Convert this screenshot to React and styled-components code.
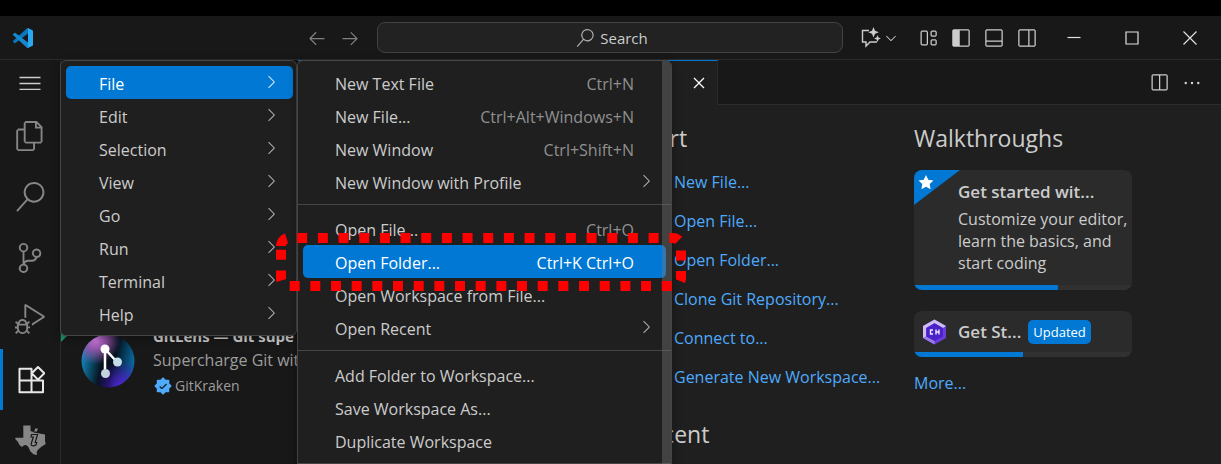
import React from "react";
import styled, { createGlobalStyle } from "styled-components";
import {
  VscArrowLeft, VscArrowRight, VscSearch, VscChevronDown, VscChevronRight,
  VscLayout, VscLayoutSidebarLeft, VscLayoutPanelOff, VscLayoutSidebarRightOff,
  VscSplitHorizontal, VscEllipsis, VscClose, VscFiles, VscSourceControl,
  VscDebugAlt, VscVerifiedFilled,
} from "react-icons/vsc";

const GlobalStyle = createGlobalStyle`
  *, *::before, *::after { box-sizing: border-box; }
  body {
    margin: 0;
    background: #000;
    color: #cccccc;
    font: 16px/22px "Open Sans", "Noto Sans", sans-serif;
  }
  button { font: inherit; color: inherit; background: none; border: 0; padding: 0; }
  a { color: #4daafc; text-decoration: none; }
  h2, h3, p, ul { margin: 0; padding: 0; }
`;

const Screen = styled.div`
  display: flex;
  flex-direction: column;
  height: 100vh;
  padding-top: 16px;
  overflow: hidden;
`;

const Window = styled.div`
  position: relative;
  flex: 1;
  min-height: 0;
  display: flex;
  flex-direction: column;
  background: #181818;
`;

const TitleBar = styled.header`
  flex: none;
  height: 44px;
  display: grid;
  grid-template-columns: 1fr minmax(120px, 466px) 1fr;
  align-items: center;
  padding-right: 1px;
  border-bottom: 1px solid #2b2b2b;
`;

const TitleSide = styled.div`
  display: flex;
  align-items: center;
  justify-content: ${(p) => (p.$end ? "flex-end" : "space-between")};
  padding: ${(p) => (p.$end ? "0 1px 0 0" : "0 11px 0 13px")};
`;

const Group = styled.div`
  display: flex;
  align-items: center;
  margin-right: ${(p) => p.$after || 0}px;
`;

const IconButton = styled.button`
  width: ${(p) => p.$w || 33}px;
  height: 33px;
  display: flex;
  align-items: center;
  justify-content: center;
  color: ${(p) => (p.$dim ? "#7f7f7f" : "#cccccc")};
  font-size: 20px;
`;

const SearchBox = styled.button`
  height: 31px;
  display: flex;
  align-items: center;
  justify-content: center;
  gap: 6px;
  padding-left: 4px;
  font-size: 15px;
  background: #222222;
  border: 1px solid #424242;
  border-radius: 8px;
  svg { font-size: 18px; color: #b0b0b0; }
`;

const Body = styled.div`
  flex: 1;
  min-height: 0;
  display: flex;
`;

const ActivityBar = styled.nav`
  flex: none;
  width: 61px;
  display: flex;
  flex-direction: column;
  border-right: 1px solid #2b2b2b;
  overflow: hidden;
`;

const Activity = styled.button`
  flex: none;
  height: ${(p) => (p.$short ? 45 : 61)}px;
  display: flex;
  align-items: center;
  justify-content: center;
  color: ${(p) => (p.$active ? "#e8e8e8" : "#868686")};
  border-left: 3px solid ${(p) => (p.$active ? "#0078d4" : "transparent")};
  border-right: 3px solid transparent;
  font-size: 30px;
`;

const SideBar = styled.aside`
  flex: none;
  width: 237px;
  padding-top: 250px;
  overflow: hidden;
`;

const Extension = styled.article`
  position: relative;
  display: flex;
  gap: 18px;
  padding: 14px 0 14px 20px;
`;

const Ribbon = styled.span`
  position: absolute;
  top: 0;
  left: 0;
  width: 32px;
  height: 32px;
  background: #1f9070;
  clip-path: polygon(0 0, 100% 0, 0 100%);
`;

const ExtensionIcon = styled.svg`
  flex: none;
  width: 54px;
  height: 54px;
  margin-top: 10px;
`;

const ExtensionText = styled.div`
  white-space: nowrap;
  line-height: 24px;
  h3 { font-size: 15px; line-height: 24px; font-weight: 700; }
  p { color: #9d9d9d; font-size: 16px; }
`;

const Publisher = styled.div`
  display: flex;
  align-items: center;
  gap: 2px;
  line-height: 27px;
  font-size: 14px;
  color: #9d9d9d;
  svg { font-size: 20px; color: #4daafc; }
`;

const Editor = styled.main`
  flex: 1;
  min-width: 0;
  display: flex;
  flex-direction: column;
  background: #1f1f1f;
`;

const TabBar = styled.div`
  flex: none;
  height: 45px;
  display: flex;
  justify-content: space-between;
  background: #181818;
  box-shadow: inset 0 -1px #2b2b2b;
  padding-right: 13px;
`;

const Tab = styled.div`
  width: 420px;
  display: flex;
  align-items: center;
  justify-content: flex-end;
  padding-right: 2px;
  background: #1f1f1f;
  border-top: 1px solid #0078d4;
  border-right: 1px solid #2b2b2b;
  color: #fff;
`;

const Welcome = styled.div`
  display: grid;
  grid-template-columns: 278px minmax(0, 218px);
  padding: 17px 0 0 338px;
`;

const Heading = styled.h2`
  font-size: 23px;
  line-height: 32px;
  font-weight: 400;
  margin-bottom: ${(p) => p.$after || 0}px;
`;

const LinkList = styled.ul`
  list-style: none;
  display: flex;
  flex-direction: column;
  gap: 17px;
  padding-left: 38px;
  margin-bottom: 30px;
  white-space: nowrap;
`;

const Card = styled.button`
  position: relative;
  width: 100%;
  display: block;
  text-align: left;
  background: #2b2b2b;
  border-radius: 8px;
  margin-bottom: ${(p) => p.$after}px;
  overflow: hidden;
`;

const CardBody = styled.div`
  display: flex;
  align-items: center;
  gap: 7px;
  padding: ${(p) => (p.$tall ? "10px 4px 11px 44px" : "8px 8px 7px")};
`;

const CardTitle = styled.h3`
  font-size: 17px;
  line-height: 24px;
  font-weight: 600;
`;

const CardText = styled.p`
  margin-top: 4px;
`;

const Corner = styled.svg`
  position: absolute;
  top: 0;
  left: 0;
  width: 46px;
  height: 35px;
`;

const Badge = styled.span`
  background: #0078d4;
  color: #fff;
  border-radius: 5px;
  padding: 0 5px;
  font-size: 13px;
  line-height: 24px;
`;

const Progress = styled.div`
  height: 5px;
  background: linear-gradient(#0078d4, #0078d4) 0 0 / ${(p) => p.$value}% 100% no-repeat #313131;
`;

const Menu = styled.div`
  position: absolute;
  top: 44px;
  left: ${(p) => p.$left}px;
  width: ${(p) => p.$width}px;
  padding: 5px 0;
  background: #1f1f1f;
  border: 1px solid #454545;
  border-radius: 6px;
  box-shadow: 0 2px 8px rgba(0, 0, 0, 0.36);
  overflow: hidden;
`;

const MenuItem = styled.button`
  width: calc(100% - ${(p) => (p.$sub ? 10 : 8)}px);
  margin-left: 5px;
  height: 33px;
  display: flex;
  align-items: center;
  justify-content: space-between;
  padding: 2px ${(p) => (p.$chevron ? (p.$sub ? 10 : 12) : 32)}px 0 ${(p) => (p.$sub ? 32 : 33)}px;
  border-radius: 5px;
  background: ${(p) => (p.$active ? "#0078d4" : "none")};
  color: ${(p) => (p.$active ? "#fff" : "#cccccc")};
  svg { font-size: 20px; margin-bottom: 4px; color: ${(p) => (p.$active ? "#d0e4f5" : "#a8a8a8")}; }
`;

const Shortcut = styled.span`
  color: ${(p) => (p.$active ? "#fff" : "#909090")};
`;

const Separator = styled.hr`
  height: 1px;
  margin: 6px 0 7px;
  border: 0;
  background: #454545;
`;

const ScrollBar = styled.div`
  position: absolute;
  top: 0;
  right: 0;
  bottom: 0;
  width: 9px;
  background: rgba(121, 121, 121, 0.4);
`;

const Highlight = styled.svg`
  position: absolute;
  top: 216px;
  left: 276px;
  width: 410px;
  height: 60px;
  pointer-events: none;
`;

const VSCodeLogo = () => (
  <svg width="20" height="20" viewBox="0 0 100 100" aria-hidden="true">
    <path fill="#0b76bd" d="M96.46 10.8L75.86.88A6.25 6.25 0 0 0 68.75 2.08L1.3 63.58a4.17 4.17 0 0 0 0 6.16l5.51 5.01a4.17 4.17 0 0 0 5.32.24L93.36 13.37C96.09 11.3 100 13.25 100 16.67v-.24a6.25 6.25 0 0 0-3.54-5.63Z" />
    <path fill="#1688d0" d="M96.46 89.2l-20.6 9.92a6.25 6.25 0 0 1-7.11-1.2L1.3 36.42a4.17 4.17 0 0 1 0-6.17l5.51-5a4.17 4.17 0 0 1 5.32-.24l81.23 61.62C96.09 88.7 100 86.75 100 83.33v.24a6.25 6.25 0 0 1-3.54 5.63Z" />
    <path fill="#29a9f2" d="M75.86 99.13a6.25 6.25 0 0 1-7.11-1.21C71.06 100.22 75 98.59 75 95.33V4.67c0-3.26-3.94-4.9-6.25-2.59A6.25 6.25 0 0 1 75.86.87l20.6 9.91A6.25 6.25 0 0 1 100 16.41v67.18a6.25 6.25 0 0 1-3.54 5.63L75.86 99.13Z" />
  </svg>
);

const ChatSparkle = () => (
  <svg width="21" height="21" viewBox="0 0 21 21" aria-hidden="true">
    <path d="M9 3.500H2.500V15H6v4l4-4h7" fill="none" stroke="#cccccc" strokeWidth="1.400" />
    <path d="M13.500 0l1.500 3.800L18.800 5.300 15 6.800l-1.500 3.800L12 6.800 8.200 5.300 12 3.800z" fill="#cccccc" />
    <path d="M17.500 8.200l1 2.300 2.400 1-2.400 1-1 2.400-1-2.400-2.400-1 2.400-1z" fill="#cccccc" />
  </svg>
);

const WindowGlyph = ({ d }) => (
  <svg width="14" height="14" viewBox="0 0 14 14" aria-hidden="true">
    <path d={d} fill="none" stroke="#e0e0e0" strokeWidth="1.200" />
  </svg>
);

const Burger = () => (
  <svg width="22" height="14" viewBox="0 0 22 14" aria-hidden="true">
    <path d="M0.500 1.500h21M0.500 7.500h21M0.500 13.500h21" stroke="#cccccc" strokeWidth="1.300" />
  </svg>
);

const ExtensionsIcon = () => (
  <svg width="30" height="30" viewBox="0 0 30 30" aria-hidden="true">
    <path
      d="M4.500 3.800h12v23.400h-12zM4.500 15.500H28v11.700H16.500V15.500M23 2l6.300 6.300L23 14.600l-6.300-6.300z"
      fill="none" stroke="currentColor" strokeWidth="2" strokeLinejoin="round"
    />
  </svg>
);

const StateIcon = () => (
  <svg width="31" height="31" viewBox="0 0 31 31" aria-hidden="true">
    <path
      fill="#868686"
      d="M8.300 0.500H15.500V6l5 1.800 4 .7L30 9.500v6.500l.7 3-4 2.500-4 3.500-1 2 .3 3-3.500-.8-3-2.700-2.400-5-2.300-1.500-1.800.2L7 22l-2.500-2L3 17 .3 14v-1.200h8z"
    />
    <path d="M16.500 9.500h6l-2.300 8h1.500l-.7 2.500c-2 1-5.500 1.500-4.700-1.500l2-6.500h-2.300z" fill="#868686" stroke="#181818" strokeWidth="1.200" />
    <path d="M19.800 3h3.700l-1.200 4h-3.700z" fill="#868686" stroke="#181818" strokeWidth="1" />
  </svg>
);

const GitLensLogo = () => (
  <ExtensionIcon viewBox="0 0 54 54" aria-hidden="true">
    <defs>
      <linearGradient id="lens" x1="0" y1="0.400" x2="1" y2="0.600">
        <stop offset="0" stopColor="#1289c0" />
        <stop offset="0.400" stopColor="#06121c" />
        <stop offset="0.600" stopColor="#04101c" />
        <stop offset="1" stopColor="#0a70a8" />
      </linearGradient>
      <radialGradient id="pink" cx="0.260" cy="0.080" r="0.480">
        <stop offset="0" stopColor="#d77ce6" />
        <stop offset="0.450" stopColor="#9c55ae" stopOpacity="0.850" />
        <stop offset="1" stopColor="#9c55ae" stopOpacity="0" />
      </radialGradient>
      <radialGradient id="violet" cx="0.760" cy="0.980" r="0.500">
        <stop offset="0" stopColor="#5a22e0" />
        <stop offset="1" stopColor="#4010b0" stopOpacity="0" />
      </radialGradient>
    </defs>
    <circle cx="27" cy="27" r="26.500" fill="url(#lens)" />
    <circle cx="27" cy="27" r="26.500" fill="url(#pink)" />
    <circle cx="27" cy="27" r="26.500" fill="url(#violet)" />
    <path d="M24 15v24M24 15l12 13" stroke="#fff" strokeWidth="2.500" />
    <circle cx="24" cy="15" r="4.500" fill="#fff" />
    <circle cx="36.500" cy="28" r="4.500" fill="#c4dbe8" />
    <circle cx="24.500" cy="39.500" r="4.500" fill="#c4d3de" />
  </ExtensionIcon>
);

const HexLogo = () => (
  <svg width="29" height="26" viewBox="0 0 29 26" aria-hidden="true">
    <path d="M12.500 0.500L24 7v12L12.500 25.500 1 19V7z" fill="#6a3ed6" />
    <path d="M12.500 0.500L24 7l-3 2-8.500-4.800L4.500 9v8.500L1 19V7z" fill="#cdbdf0" />
    <path d="M1 19l3.500-2 8 4.500v4z" fill="#9a7be6" />
    <path d="M12.500 4.200L20.800 9v8.500l-8.300 4.500-8.300-4.500V9z" fill="#4a20c8" />
    <path d="M11 11H8.500v4H11M14 10.500v5M17 10.500v5M14 13h3" stroke="#efe8ff" strokeWidth="1.400" fill="none" />
  </svg>
);

const MAIN_MENU = ["File", "Edit", "Selection", "View", "Go", "Run", "Terminal", "Help"];

const FILE_MENU = [
  { label: "New Text File", keys: "Ctrl+N" },
  { label: "New File...", keys: "Ctrl+Alt+Windows+N" },
  { label: "New Window", keys: "Ctrl+Shift+N" },
  { label: "New Window with Profile", more: true },
  null,
  { label: "Open File...", keys: "Ctrl+O" },
  { label: "Open Folder...", keys: "Ctrl+K Ctrl+O", active: true },
  { label: "Open Workspace from File..." },
  { label: "Open Recent", more: true },
  null,
  { label: "Add Folder to Workspace..." },
  { label: "Save Workspace As..." },
  { label: "Duplicate Workspace" },
  null,
];

const START_LINKS = [
  "New File...", "Open File...", "Open Folder...",
  "Clone Git Repository...", "Connect to...", "Generate New Workspace...",
];

export default function App() {
  return (
    <Screen>
      <GlobalStyle />
      <Window>
        <TitleBar>
          <TitleSide>
            <VSCodeLogo />
            <Group>
              <IconButton $dim aria-label="Back"><VscArrowLeft /></IconButton>
              <IconButton $dim aria-label="Forward"><VscArrowRight /></IconButton>
            </Group>
          </TitleSide>
          <SearchBox><VscSearch />Search</SearchBox>
          <TitleSide $end>
            <Group $after={10}>
              <IconButton $w={22} aria-label="Chat"><ChatSparkle /></IconButton>
              <IconButton $w={20} aria-label="Chat options"><VscChevronDown size={16} /></IconButton>
            </Group>
            <Group $after={2}>
              <IconButton aria-label="Customize layout"><VscLayout /></IconButton>
              <IconButton aria-label="Toggle primary side bar"><VscLayoutSidebarLeft /></IconButton>
              <IconButton aria-label="Toggle panel"><VscLayoutPanelOff /></IconButton>
              <IconButton aria-label="Toggle secondary side bar"><VscLayoutSidebarRightOff /></IconButton>
            </Group>
            <Group>
              <IconButton $w={58} aria-label="Minimize"><WindowGlyph d="M0.500 6.500h13" /></IconButton>
              <IconButton $w={58} aria-label="Maximize"><WindowGlyph d="M1 1h12v12H1z" /></IconButton>
              <IconButton $w={58} aria-label="Close"><WindowGlyph d="M0.500 0.500l13 13M13.500 0.500l-13 13" /></IconButton>
            </Group>
          </TitleSide>
        </TitleBar>

        <Body>
          <ActivityBar>
            <Activity $short aria-label="Application menu"><Burger /></Activity>
            <Activity aria-label="Explorer"><VscFiles /></Activity>
            <Activity aria-label="Search"><VscSearch /></Activity>
            <Activity aria-label="Source control"><VscSourceControl /></Activity>
            <Activity aria-label="Run and debug"><VscDebugAlt /></Activity>
            <Activity $active aria-label="Extensions"><ExtensionsIcon /></Activity>
            <Activity aria-label="Device tools"><StateIcon /></Activity>
          </ActivityBar>

          <SideBar>
            <Extension>
              <Ribbon />
              <GitLensLogo />
              <ExtensionText>
                <h3>GitLens — Git supe</h3>
                <p>Supercharge Git wit</p>
                <Publisher><VscVerifiedFilled />GitKraken</Publisher>
              </ExtensionText>
            </Extension>
          </SideBar>

          <Editor>
            <TabBar>
              <Tab><IconButton aria-label="Close tab"><VscClose color="#fff" /></IconButton></Tab>
              <Group>
                <IconButton aria-label="Split editor"><VscSplitHorizontal /></IconButton>
                <IconButton aria-label="More actions"><VscEllipsis /></IconButton>
              </Group>
            </TabBar>
            <Welcome>
              <section>
                <Heading $after={17}>Start</Heading>
                <LinkList>
                  {START_LINKS.map((t) => <li key={t}><a href="#start">{t}</a></li>)}
                </LinkList>
                <Heading>Recent</Heading>
              </section>
              <section>
                <Heading $after={16}>Walkthroughs</Heading>
                <Card $after={21}>
                  <Corner viewBox="0 0 46 35" aria-hidden="true">
                    <path d="M0 0h46L0 35z" fill="#0078d4" />
                    <path d="M12 5l2.300 4.800 5.200.7-3.800 3.600.9 5.200L12 16.800l-4.600 2.500.9-5.200-3.800-3.600 5.200-.7z" fill="#fff" />
                  </Corner>
                  <CardBody $tall>
                    <div>
                      <CardTitle>Get started wit...</CardTitle>
                      <CardText>Customize your editor, learn the basics, and start coding</CardText>
                    </div>
                  </CardBody>
                  <Progress $value={66} />
                </Card>
                <Card $after={15}>
                  <CardBody>
                    <HexLogo />
                    <CardTitle>Get St...</CardTitle>
                    <Badge>Updated</Badge>
                  </CardBody>
                  <Progress $value={50} />
                </Card>
                <a href="#more">More...</a>
              </section>
            </Welcome>
          </Editor>
        </Body>

        <Menu $left={60} $width={237} role="menu">
          {MAIN_MENU.map((t, i) => (
            <MenuItem key={t} $chevron $active={i === 0} role="menuitem">
              {t}<VscChevronRight />
            </MenuItem>
          ))}
        </Menu>
        <Menu $left={297} $width={375} role="menu">
          {FILE_MENU.map((m, i) =>
            m ? (
              <MenuItem key={m.label} $sub $chevron={m.more} $active={m.active} role="menuitem">
                {m.label}
                {m.keys && <Shortcut $active={m.active}>{m.keys}</Shortcut>}
                {m.more && <VscChevronRight />}
              </MenuItem>
            ) : (
              <Separator key={i} />
            )
          )}
          <ScrollBar />
        </Menu>

        <Highlight viewBox="0 0 410 60" aria-hidden="true">
          <path
            d="M5 14A8 8 0 0 1 13 6H397A8 8 0 0 1 405 14V46A8 8 0 0 1 397 54H13A8 8 0 0 1 5 46Z"
            fill="none"
            stroke="#ff0000"
            strokeWidth="10"
            strokeDasharray="10 10.670"
          />
        </Highlight>
      </Window>
    </Screen>
  );
}
